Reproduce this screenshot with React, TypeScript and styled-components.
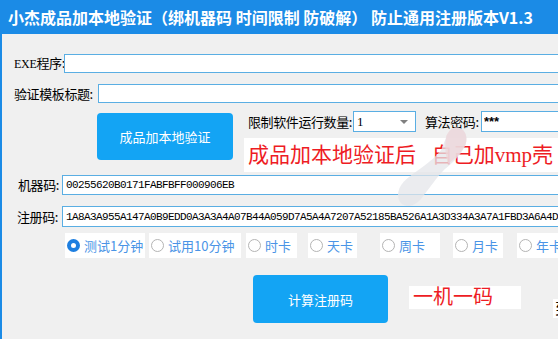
import React from 'react'
import styled, { createGlobalStyle } from 'styled-components'

const GlobalStyle = createGlobalStyle`
  html, body {
    margin: 0;
    padding: 0;
    background: #f0f0f0;
  }
  body {
    font-family: "Noto Sans CJK SC", "Noto Sans", sans-serif;
  }
`

const Window = styled.div`
  position: relative;
  width: 558px;
  height: 339px;
  overflow: hidden;
  display: flex;
  flex-direction: column;
  background: #f0f0f0;
`

const TitleBar = styled.div`
  flex: none;
  height: 34px;
  display: flex;
  align-items: center;
  padding-left: 8px;
  background: #1b8be6;
  color: #ffffff;
  font-size: 16px;
  font-weight: bold;
  white-space: nowrap;
`

const Body = styled.div`
  flex: 1;
  width: 640px;
  display: flex;
  flex-direction: column;
  padding-top: 20px;
  border-left: 2px solid #1b8be6;
`

const Row = styled.div<{ $top: number; $left?: number; $align?: string }>`
  display: flex;
  align-items: ${({ $align }) => $align || 'center'};
  margin-top: ${({ $top }) => $top}px;
  padding-left: ${({ $left }) => $left || 0}px;
`

const Label = styled.div<{ $w: number }>`
  flex: none;
  width: ${({ $w }) => $w}px;
  font-size: 13px;
  line-height: 16px;
  letter-spacing: -0.4px;
  color: #000;
  white-space: nowrap;
`

const Latin = styled.span`
  font-family: "Liberation Serif", serif;
  font-size: 12px;
  letter-spacing: -0.3px;
`

const Field = styled.input<{ $h: number }>`
  flex: 1;
  min-width: 0;
  height: ${({ $h }) => $h}px;
  box-sizing: border-box;
  margin: 0;
  padding: 0 3px;
  border: 1px solid #5aaee3;
  background: #ffffff;
  outline: none;
  font-family: "Liberation Mono", monospace;
  font-size: 11px;
  letter-spacing: -0.6px;
  color: #000;
`

const PassField = styled(Field)`
  font-family: "Liberation Sans", sans-serif;
  font-size: 13px;
  font-weight: bold;
  letter-spacing: 0;
  padding: 0 2px;
`

const BlueButton = styled.button<{ $w: number; $h: number; $top?: number; $left: number }>`
  flex: none;
  width: ${({ $w }) => $w}px;
  height: ${({ $h }) => $h}px;
  margin: ${({ $top }) => $top || 0}px 0 0 ${({ $left }) => $left}px;
  border: none;
  border-radius: 4px;
  background: #13a4f4;
  color: #ffffff;
  font-family: "Noto Sans CJK SC", sans-serif;
  font-size: 13px;
  cursor: pointer;
`

const SideColumn = styled.div`
  flex: 1;
  display: flex;
  flex-direction: column;
  margin-left: 11px;
`

const LimitRow = styled.div`
  display: flex;
  align-items: center;
  height: 21px;
  padding-left: 4px;
`

const Select = styled.div`
  flex: none;
  position: relative;
  width: 63px;
  height: 21px;
  box-sizing: border-box;
  margin-right: 9px;
  padding-left: 3px;
  border: 1px solid #5aaee3;
  background: #fff;
  font-family: "Liberation Serif", serif;
  font-size: 13px;
  line-height: 19px;
`

const Caret = styled.span`
  position: absolute;
  right: 7px;
  top: 8px;
  width: 0;
  height: 0;
  border-left: 4px solid transparent;
  border-right: 4px solid transparent;
  border-top: 4px solid #808080;
`

const Notice = styled.div<{ $w?: number; $h: number; $top?: number; $left?: number; $size: number }>`
  flex: none;
  width: ${({ $w }) => ($w ? `${$w}px` : 'auto')};
  height: ${({ $h }) => $h}px;
  margin: ${({ $top }) => $top || 0}px 0 0 ${({ $left }) => $left || 0}px;
  padding-left: 4px;
  box-sizing: border-box;
  background: #ffffff;
  color: #ee1c24;
  font-family: "Liberation Serif", "Noto Sans CJK SC", serif;
  font-size: ${({ $size }) => $size}px;
  line-height: ${({ $h }) => $h}px;
  white-space: pre;
  overflow: hidden;
`

const Choice = styled.label<{ $w: number; $gap: number }>`
  flex: none;
  display: flex;
  align-items: center;
  gap: 4px;
  width: ${({ $w }) => $w}px;
  height: 25px;
  margin-left: ${({ $gap }) => $gap}px;
  padding-left: 2px;
  box-sizing: border-box;
  background: #ffffff;
  color: #4a94e6;
  font-size: 13px;
  white-space: nowrap;
  overflow: hidden;
`

const Dot = styled.span<{ $checked?: boolean }>`
  flex: none;
  width: 13px;
  height: 13px;
  box-sizing: border-box;
  border-radius: 50%;
  background: #fff;
  border: ${({ $checked }) => ($checked ? '4px solid #1e7fe0' : '1px solid #b4b4b4')};
`

const Tail = styled.div`
  flex: none;
  margin: 24px 0 0 32px;
  height: 19px;
  padding: 0 2px;
  background: #fff;
  font-size: 16px;
  line-height: 19px;
  color: #000;
`

const Watermark = styled.svg`
  position: absolute;
  left: 388px;
  top: 122px;
  pointer-events: none;
`

const choices = [
  { label: '测试1分钟', w: 80, gap: 63, checked: true },
  { label: '试用10分钟', w: 92, gap: 4 },
  { label: '时卡', w: 51, gap: 5 },
  { label: '天卡', w: 49, gap: 11 },
  { label: '周卡', w: 60, gap: 23 },
  { label: '月卡', w: 50, gap: 13 },
  { label: '年卡', w: 60, gap: 14 },
]

const App = () => {
  return (
    <Window>
      <GlobalStyle />
      <TitleBar>小杰成品加本地验证（绑机器码 时间限制 防破解） 防止通用注册版本V1.3</TitleBar>
      <Body>
        <Row $top={0} $left={12}>
          <Label $w={50}>
            <Latin>EXE</Latin>程序:
          </Label>
          <Field $h={19} readOnly defaultValue="" />
        </Row>
        <Row $top={11} $left={12}>
          <Label $w={84}>验证模板标题:</Label>
          <Field $h={19} readOnly defaultValue="" />
        </Row>
        <Row $top={8} $align="flex-start">
          <BlueButton $w={136} $h={47} $top={2} $left={95}>成品加本地验证</BlueButton>
          <SideColumn>
            <LimitRow>
              <Label $w={105}>限制软件运行数量:</Label>
              <Select>
                1
                <Caret />
              </Select>
              <Label $w={56}>算法密码:</Label>
              <PassField $h={21} readOnly defaultValue="***" />
            </LimitRow>
            <Notice $h={34} $top={6} $size={21}>成品加本地验证后   自己加vmp壳</Notice>
          </SideColumn>
        </Row>
        <Row $top={3} $left={16}>
          <Label $w={44}>机器码:</Label>
          <Field $h={20} readOnly defaultValue="00255620B0171FABFBFF000906EB" />
        </Row>
        <Row $top={11} $left={15}>
          <Label $w={45}>注册码:</Label>
          <Field
            $h={21}
            readOnly
            defaultValue="1A8A3A955A147A0B9EDD0A3A3A4A07B44A059D7A5A4A7207A52185BA526A1A3D334A3A7A1FBD3A6A4D3A4A"
          />
        </Row>
        <Row $top={6}>
          {choices.map((c) => (
            <Choice key={c.label} $w={c.w} $gap={c.gap}>
              <Dot $checked={c.checked} />
              {c.label}
            </Choice>
          ))}
        </Row>
        <Row $top={17} $align="flex-start">
          <BlueButton $w={135} $h={48} $left={251}>计算注册码</BlueButton>
          <Notice $w={112} $h={23} $top={11} $left={21} $size={20}>一机一码</Notice>
          <Tail>到期</Tail>
        </Row>
      </Body>
      <Watermark width="85" height="90" viewBox="0 0 90 95">
        <path
          d="M70 6 C78 4 86 12 82 24 C78 34 70 42 60 50 C52 58 44 70 36 80 C30 88 20 92 14 86 C8 80 10 68 20 60 C32 50 46 42 56 30 C60 22 62 10 70 6 Z"
          fill="#e4e5e9"
          opacity="0.75"
        />
        <path d="M70 6 C78 4 86 12 82 24 C78 32 72 38 64 44 C60 36 60 22 62 14 C64 10 66 7 70 6 Z" fill="#eed6da" opacity="0.75" />
      </Watermark>
    </Window>
  )
}

export default App
